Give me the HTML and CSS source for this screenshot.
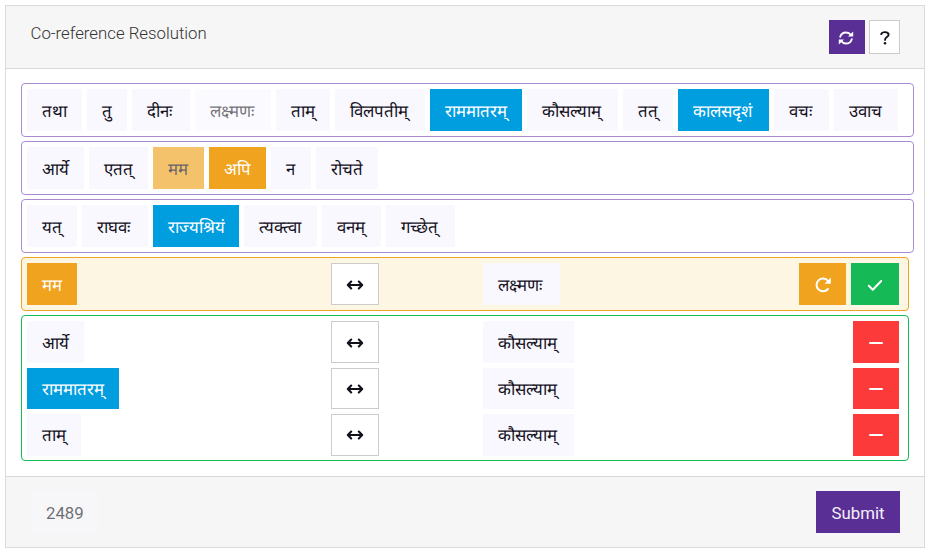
FILE: index.html
```html
<!DOCTYPE html>
<html lang="sa">
<head>
<meta charset="utf-8">
<title>Co-reference Resolution</title>
<link rel="stylesheet" href="styles.css">
</head>
<body>
<svg class="defs" aria-hidden="true">
  <symbol id="arrows" viewBox="0 0 18 12"><path d="M2 6h14M5.2 2.6 1.8 6l3.4 3.4M12.8 2.6 16.2 6l-3.4 3.4"/></symbol>
  <symbol id="minus" viewBox="0 0 14 4"><path d="M1 2h12"/></symbol>
</svg>
<main class="card">
  <header class="card-header">
    <h1 class="title">Co-reference Resolution</h1>
    <div class="tools">
      <button class="tool primary" aria-label="Refresh"><svg class="refresh" viewBox="0 0 16 16"><path d="M2.2 6.8C3 4.2 5.2 2.5 8 2.5c2 0 3.8.8 4.9 2.4M13.8 9.2C13 11.8 10.8 13.5 8 13.5c-2 0-3.8-.8-4.9-2.4"/><path class="solid" d="M15.2 1.4v5.2H10zM.8 14.6V9.400H6z"/></svg></button>
      <button class="tool help" aria-label="Help"><svg class="question" viewBox="0 0 12 16"><path d="M2.2 4.1C2.7 2.7 4.1 2.1 6 2.1c2.1 0 3.6 1 3.6 2.6C9.6 7.1 6 7 6 9.9"/><circle cx="6" cy="13.3" r="1.25"/></svg></button>
    </div>
  </header>
  <section class="card-body">
    <div class="line line-1">
      <span class="token">तथा</span><span class="token">तु</span><span class="token">दीनः</span><span class="token faded">लक्ष्मणः</span><span class="token">ताम्</span><span class="token">विलपतीम्</span><span class="token blue">राममातरम्</span><span class="token">कौसल्याम्</span><span class="token">तत्</span><span class="token blue">कालसदृशं</span><span class="token">वचः</span><span class="token">उवाच</span>
    </div>
    <div class="line line-2">
      <span class="token">आर्ये</span><span class="token">एतत्</span><span class="token orange faded">मम</span><span class="token orange">अपि</span><span class="token">न</span><span class="token">रोचते</span>
    </div>
    <div class="line line-3">
      <span class="token">यत्</span><span class="token">राघवः</span><span class="token blue">राज्यश्रियं</span><span class="token">त्यक्‍त्वा</span><span class="token">वनम्</span><span class="token">गच्छेत्</span>
    </div>
    <div class="relations pending">
      <div class="relation">
        <div><span class="token orange">मम</span></div>
        <div><span class="link"><svg><use href="#arrows"/></svg></span></div>
        <div><span class="token target-short">लक्ष्मणः</span></div>
        <div class="actions">
          <button class="action reset" aria-label="Reset"><svg viewBox="0 0 18 18"><path d="M13.9 13A6.4 6.4 0 1 1 14 5"/><path class="solid" d="M16.8 1.6v6.2h-6.2z"/></svg></button>
          <button class="action confirm" aria-label="Confirm"><svg viewBox="0 0 18 18"><path d="m2.8 9.8 4 4L15.2 5"/></svg></button>
        </div>
      </div>
    </div>
    <div class="relations saved">
      <div class="relation">
        <div><span class="token">आर्ये</span></div>
        <div><span class="link"><svg><use href="#arrows"/></svg></span></div>
        <div><span class="token target">कौसल्याम्</span></div>
        <div class="actions"><button class="action remove" aria-label="Remove"><svg><use href="#minus"/></svg></button></div>
      </div>
      <div class="relation">
        <div><span class="token blue">राममातरम्</span></div>
        <div><span class="link"><svg><use href="#arrows"/></svg></span></div>
        <div><span class="token target">कौसल्याम्</span></div>
        <div class="actions"><button class="action remove" aria-label="Remove"><svg><use href="#minus"/></svg></button></div>
      </div>
      <div class="relation">
        <div><span class="token">ताम्</span></div>
        <div><span class="link"><svg><use href="#arrows"/></svg></span></div>
        <div><span class="token target">कौसल्याम्</span></div>
        <div class="actions"><button class="action remove" aria-label="Remove"><svg><use href="#minus"/></svg></button></div>
      </div>
    </div>
  </section>
  <footer class="card-footer">
    <span class="token faded">2489</span>
    <button class="submit">Submit</button>
  </footer>
</main>
</body>
</html>
```

FILE: styles.css
```css
* { box-sizing: border-box; }
body {
  margin: 0;
  padding: 5px 7px 6px 5px;
  background: #fff;
  font: 400 16.8px/26px Roboto, sans-serif;
  color: #13101c;
}
button { margin: 0; padding: 0; border: 0; font: inherit; color: inherit; }
svg { display: block; fill: none; stroke: currentColor; stroke-linecap: round; stroke-linejoin: round; }
.solid { fill: currentColor; stroke: none; }
.defs { position: absolute; width: 0; height: 0; }
.card { display: flex; flex-direction: column; height: 543px; border: 1px solid #dbdbdb; }
.card-header {
  display: flex;
  justify-content: space-between;
  height: 63px;
  padding: 14px 24px 0 24.5px;
  background: #f6f6f6;
  border-bottom: 1px solid #d8d8d8;
}
.title { margin: 0; font-size: 16.8px; font-weight: 300; line-height: 26px; color: #333; }
.tools { display: flex; gap: 4px; }
.tool { display: flex; align-items: center; justify-content: center; height: 34px; }
.primary { width: 36px; background: #592f95; color: #fff; }
.refresh { width: 16px; height: 16px; margin: 1px 0 0 -2px; stroke-width: 1.8; }
.help { width: 31px; background: #fff; border: 1px solid #ccc; }
.question { width: 12px; height: 16px; margin-top: 1px; stroke-width: 1.9; }
.question circle { fill: currentColor; stroke: none; }
.card-body { flex: 1; display: flex; flex-direction: column; gap: 4px; padding: 14px 10px 0 15px; }
.line {
  display: grid;
  column-gap: 5px;
  height: 54px;
  padding: 5px;
  border: 1px solid #a98bd3;
  border-radius: 4px;
}
.line-1 { grid-template-columns: 55px 40px 58px 76px 54px 90px 92px 91px 50px 91px 55px 64px; }
.line-2 { grid-template-columns: 57px 59px 51px 57px 40px 62px; }
.line-3 { grid-template-columns: 49.5px 66px 86px 73px 59px 69px; }
.token {
  display: inline-block;
  height: 42px;
  padding: 9px 0 7px 15px;
  background: #f9f8fe;
  white-space: nowrap;
  vertical-align: top;
}
.blue { background: #009ddf; color: #fff; }
.orange { background: #f0a31e; color: #fff; }
.faded { opacity: .6; }
.orange.faded { background: #f0a31e; color: #13101c; opacity: .65; }
.relations {
  display: flex;
  flex-direction: column;
  gap: 4.6px;
  margin-right: 5px;
  padding: 5.3px 9px 5px 5px;
  border: 1px solid;
  border-radius: 4px;
}
.pending { height: 54px; background: #fdf6e3; border-color: #f0a31e; }
.saved { height: 146px; border-color: #15b956; }
.relation { display: grid; flex: none; grid-template-columns: 304px 152px 1fr auto; height: 41.7px; }
.relation .token { height: 41.7px; padding: 8.5px 15px 7px; }
.relation .target { width: 91px; }
.relation .target-short { width: 77px; }
.link {
  display: flex;
  align-items: center;
  justify-content: center;
  width: 48px;
  height: 41.7px;
  padding-top: 1px;
  background: #fff;
  border: 1px solid #ccc;
}
.link svg { width: 18px; height: 12px; stroke-width: 2.1; }
.actions { display: flex; gap: 5px; }
.action { display: flex; align-items: center; justify-content: center; height: 41.7px; padding-top: 1px; color: #fff; }
.action svg { width: 18px; height: 18px; stroke-width: 2; }
.reset { width: 47px; background: #f0a31e; }
.confirm { width: 48px; background: #15b956; }
.remove { width: 46px; background: #fc3a3a; }
.action.remove svg { width: 14px; height: 4px; }
.card-footer {
  display: flex;
  justify-content: space-between;
  height: 71px;
  padding: 14px 24px 0 25px;
  background: #f6f6f6;
  border-top: 1px solid #d8d8d8;
}
.card-footer .token { width: 67px; }
.submit { width: 84px; height: 42px; padding-top: 2px; background: #592f95; color: #f4f0fa; }
```
